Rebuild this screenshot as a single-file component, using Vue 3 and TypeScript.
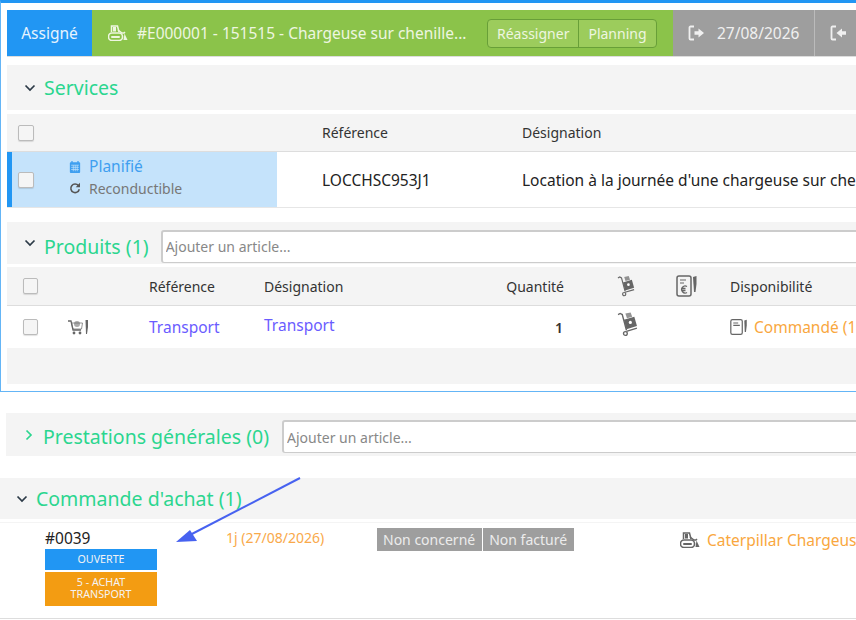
<script setup lang="ts">
interface Badge {
  label: string
  cls: string
}
const badges: Badge[] = [
  { label: 'OUVERTE', cls: 'blue' },
  { label: '5 - ACHAT TRANSPORT', cls: 'orange' }
]
const statuses = ['Non concerné', 'Non facturé']
</script>

<template>
  <div class="page">
    <svg class="defs" width="0" height="0">
      <symbol id="dozer" viewBox="0 0 20 16">
        <path d="M3.500 7V1h6l1.500 6" fill="none" stroke="currentColor" stroke-width="1.500" />
        <rect x="5" y="2" width="3" height="4.500" fill="currentColor" />
        <path d="M10 5l4 3h2l1-1" fill="none" stroke="currentColor" stroke-width="1.500" />
        <path d="M16.500 8.500l3 6.500h-4z" fill="currentColor" />
        <rect x=".5" y="8" width="14" height="7.500" rx="3.500" fill="none" stroke="currentColor" stroke-width="1.600" />
        <rect x="3" y="11" width="9" height="2" rx="1" fill="currentColor" />
      </symbol>
      <symbol id="cart" viewBox="0 0 22 16">
        <path d="M1 2h3l2 9h8" fill="none" stroke="currentColor" stroke-width="1.300" />
        <path d="M4.500 4h11l-1 6H6z" fill="none" stroke="currentColor" stroke-width="1" opacity=".7" />
        <circle cx="10" cy="5" r="3" fill="currentColor" opacity=".55" />
        <circle cx="7" cy="14" r="1.400" fill="currentColor" />
        <circle cx="13" cy="14" r="1.400" fill="currentColor" />
        <path d="M18.500 1h2.500v7l-1 7h-1z" fill="currentColor" />
      </symbol>
      <symbol id="truck" viewBox="0 0 20 24">
        <path d="M1 3l2-1 2 1 4 15" fill="none" stroke="currentColor" stroke-width="1.300" />
        <circle cx="8" cy="21" r="1.800" fill="none" stroke="currentColor" stroke-width="1.300" />
        <path d="M9 19l10-3" fill="none" stroke="currentColor" stroke-width="1.300" />
        <path d="M6.500 8l10-3 2.500 9-10 3z" fill="currentColor" />
        <path d="M8 2l5-1 1.500 4-5 1.500z" fill="currentColor" opacity=".7" />
        <circle cx="12.700" cy="10.500" r="1.500" fill="#fff" />
      </symbol>
      <symbol id="invoice" viewBox="0 0 22 22">
        <rect x="1" y="1" width="14" height="20" rx="2" fill="none" stroke="currentColor" stroke-width="1.500" />
        <path d="M4 5h6M4 8h4" stroke="currentColor" stroke-width="1.200" />
        <path d="M11 11.500a3.500 3.500 0 1 0 0 6M5.500 13.500h4M5.500 15.500h4" fill="none" stroke="currentColor" stroke-width="1.300" />
        <path d="M17 2l3.500-1v8l-1 8h-1.500z" fill="currentColor" />
      </symbol>
      <symbol id="order" viewBox="0 0 22 20">
        <rect x="1" y="1" width="14" height="18" rx="2" fill="none" stroke="currentColor" stroke-width="1.500" />
        <path d="M4 5h6M4 8h8" stroke="currentColor" stroke-width="1.300" />
        <path d="M17.500 2l3-1v7l-1 8h-1.500z" fill="currentColor" />
      </symbol>
      <symbol id="chev" viewBox="0 0 12 8">
        <path d="M1.500 1.500L6 6l4.500-4.500" fill="none" stroke="currentColor" stroke-width="1.700" />
      </symbol>
    </svg>

    <section class="panel">
      <header class="strip">
        <div class="state">Assigné</div>
        <div class="asset">
          <svg class="ico-dozer"><use href="#dozer" /></svg>
          <span class="asset-name">#E000001 - 151515 - Chargeuse sur chenille...</span>
          <div class="btn-group">
            <span>Réassigner</span>
            <span>Planning</span>
          </div>
        </div>
        <div class="date">
          <svg class="ico-door" viewBox="0 0 18 16">
            <path d="M6 1.500H2.500a1 1 0 0 0-1 1v11a1 1 0 0 0 1 1H6" fill="none" stroke="currentColor" stroke-width="1.800" />
            <path d="M6.500 6.300h4V3.500L16 8l-5.500 4.500V9.700h-4z" fill="currentColor" />
          </svg>
          <span>27/08/2026</span>
        </div>
        <div class="date">
          <svg class="ico-door" viewBox="0 0 18 16">
            <path d="M6 1.500H2.500a1 1 0 0 0-1 1v11a1 1 0 0 0 1 1H6" fill="none" stroke="currentColor" stroke-width="1.800" />
            <path d="M16 6.300h-4V3.500L6.500 8l5.500 4.500V9.700h4z" fill="currentColor" />
          </svg>
        </div>
      </header>

      <div class="sec-head services">
        <svg class="chev"><use href="#chev" /></svg>
        <h2>Services</h2>
      </div>

      <div class="svc-thead">
        <span class="check"></span>
        <span class="th">Référence</span>
        <span class="th">Désignation</span>
      </div>
      <div class="svc-row">
        <div class="svc-state">
          <span class="check"></span>
          <div class="svc-lines">
            <div class="planned">
              <svg class="ico-cal" viewBox="0 0 14 15">
                <path d="M1 3.500a1 1 0 0 1 1-1h10a1 1 0 0 1 1 1V14a1 1 0 0 1-1 1H2a1 1 0 0 1-1-1z" fill="currentColor" />
                <path d="M3.500 1v3M10.500 1v3" stroke="currentColor" stroke-width="1.500" />
                <path d="M2.500 6h9M2.500 8.500h9M2.500 11h9M5 6v7M7.300 6v7M9.600 6v7" stroke="#c5e3fb" stroke-width=".8" />
              </svg>
              <span>Planifié</span>
            </div>
            <div class="renew">
              <svg class="ico-redo" viewBox="0 0 14 14">
                <path d="M11 4.200A5 5 0 1 0 12 8.500" fill="none" stroke="currentColor" stroke-width="1.800" />
                <path d="M12.800 1v5h-5z" fill="currentColor" />
              </svg>
              <span>Reconductible</span>
            </div>
          </div>
        </div>
        <div class="svc-ref">LOCCHSC953J1</div>
        <div class="svc-label">Location à la journée d'une chargeuse sur chenilles</div>
      </div>

      <div class="sec-head products">
        <svg class="chev"><use href="#chev" /></svg>
        <h2>Produits (1)</h2>
        <input class="add" placeholder="Ajouter un article..." />
      </div>

      <div class="prod-grid prod-thead">
        <span class="check small"></span>
        <span class="th">Référence</span>
        <span class="th">Désignation</span>
        <span class="th qty">Quantité</span>
        <svg class="ico-truck head"><use href="#truck" /></svg>
        <svg class="ico-invoice"><use href="#invoice" /></svg>
        <span class="th">Disponibilité</span>
      </div>
      <div class="prod-grid prod-row">
        <div class="prod-first">
          <span class="check small"></span>
          <svg class="ico-cart"><use href="#cart" /></svg>
        </div>
        <span class="link">Transport</span>
        <span class="link up">Transport</span>
        <span class="qty strong">1</span>
        <svg class="ico-truck"><use href="#truck" /></svg>
        <span></span>
        <div class="avail">
          <svg class="ico-order"><use href="#order" /></svg>
          <span>Commandé (1)</span>
        </div>
      </div>
      <div class="prod-foot"></div>
    </section>

    <div class="sec-head general">
      <svg class="chev right"><use href="#chev" /></svg>
      <h2>Prestations générales (0)</h2>
      <input class="add" placeholder="Ajouter un article..." />
    </div>

    <div class="sec-head orders">
      <svg class="chev"><use href="#chev" /></svg>
      <h2>Commande d'achat (1)</h2>
    </div>

    <div class="order-row">
      <div class="order-id">
        <div class="order-num">#0039</div>
        <div v-for="b in badges" :key="b.label" class="badge" :class="b.cls">{{ b.label }}</div>
      </div>
      <div class="delay">1j (27/08/2026)</div>
      <div class="statuses">
        <span v-for="s in statuses" :key="s">{{ s }}</span>
      </div>
      <div class="order-asset">
        <svg class="ico-dozer dark"><use href="#dozer" /></svg>
        <span>Caterpillar Chargeuse sur chenilles</span>
      </div>
    </div>

    <svg class="arrow" width="856" height="620" viewBox="0 0 856 620">
      <path d="M300 478L188 536" stroke="#4762f0" stroke-width="2" fill="none" />
      <path d="M176 542L190 530L197 541z" fill="#4762f0" />
    </svg>
  </div>
</template>

<style>
html, body {
  margin: 0;
  background: #fff;
  overflow: hidden;
}
</style>

<style scoped>
.page {
  position: relative;
  width: 856px;
  height: 620px;
  overflow: hidden;
  font-family: "Noto Sans", sans-serif;
  font-size: 14px;
  color: #333;
  background: #fff;
  white-space: nowrap;
}
.defs {
  position: absolute;
}
.panel {
  height: 392px;
  width: 900px;
  box-sizing: border-box;
  border: 1px solid #64b5f6;
  border-top: 3px solid #2196f3;
  padding: 7px 0 0 6px;
  background: #fff;
}
.strip {
  display: flex;
  height: 47px;
  border-bottom: 1px solid #ddd;
  box-sizing: border-box;
}
.state {
  flex: none;
  width: 85px;
  background: #2196f3;
  color: #e6f3fe;
  font-size: 15.5px;
  display: flex;
  align-items: center;
  justify-content: center;
}
.asset {
  flex: none;
  width: 581px;
  background: #8bc34a;
  color: #eef6e0;
  font-size: 15.5px;
  display: flex;
  align-items: center;
  box-sizing: border-box;
  padding-left: 16px;
}
.ico-dozer {
  width: 20px;
  height: 16px;
  color: #eef6e0;
  flex: none;
}
.ico-dozer.dark {
  color: #666;
}
.asset-name {
  margin-left: 9px;
  width: 350px;
  flex: none;
}
.btn-group {
  display: flex;
  height: 29px;
  border: 1px solid #689f38;
  border-radius: 4px;
  box-sizing: border-box;
  background: #9ccc5c;
  font-size: 14px;
  overflow: hidden;
}
.btn-group span {
  display: flex;
  align-items: center;
  padding: 0 9px 0 9px;
}
.btn-group span + span {
  border-left: 1px solid #689f38;
}
.date {
  flex: none;
  background: #9e9e9e;
  color: #f0f0f0;
  font-size: 15.5px;
  display: flex;
  align-items: center;
  padding-left: 15px;
  width: 142px;
  box-sizing: border-box;
  gap: 11px;
  border-right: 1px solid #bbb;
}
.ico-door {
  width: 18px;
  height: 16px;
  flex: none;
}
.sec-head {
  display: flex;
  align-items: center;
  background: #f4f4f4;
  box-sizing: border-box;
}
.sec-head h2 {
  margin: 0;
  font-size: 19.5px;
  font-weight: 400;
  color: #2bd68f;
}
.chev {
  width: 12px;
  height: 8px;
  color: #2c3a47;
  flex: none;
}
.chev.right {
  transform: rotate(-90deg);
  color: #2bd68f;
  margin-bottom: 4px;
}
.services {
  margin-top: 8px;
  height: 45px;
  padding-left: 17px;
  gap: 8px;
}
.svc-thead {
  margin-top: 4px;
  height: 38px;
  background: #f4f4f4;
  border-bottom: 1px solid #ddd;
  display: grid;
  grid-template-columns: 315px 200px 1fr;
  align-items: center;
  box-sizing: border-box;
}
.check {
  display: block;
  width: 16px;
  height: 16px;
  box-sizing: border-box;
  border: 1px solid #bbb;
  border-radius: 2px;
  background: #f5f5f5;
  box-shadow: 0 1px 1px rgba(0, 0, 0, 0.12);
}
.svc-thead .check {
  margin-left: 11px;
}
.check.small {
  width: 15px;
  height: 16px;
  margin-left: 16px;
}
.th {
  font-size: 14px;
  color: #333;
}
.svc-row {
  height: 56px;
  display: grid;
  grid-template-columns: 270px 245px 1fr;
  align-items: center;
  border-bottom: 1px solid #e6e6e6;
  box-sizing: border-box;
}
.svc-state {
  height: 100%;
  background: #c5e3fb;
  border-left: 5px solid #2196f3;
  box-sizing: border-box;
  display: flex;
  align-items: center;
  padding-left: 6px;
}
.svc-lines {
  margin-left: 35px;
}
.planned {
  display: flex;
  align-items: center;
  gap: 8px;
  color: #3f9ff0;
  font-size: 15.5px;
  line-height: 21px;
  margin-top: -2px;
}
.ico-cal {
  width: 12px;
  height: 13px;
}
.renew {
  display: flex;
  align-items: center;
  gap: 8px;
  color: #777;
  font-size: 14px;
  line-height: 24px;
}
.ico-redo {
  width: 12px;
  height: 12px;
  color: #555;
  margin-top: -2px;
}
.svc-ref {
  padding-left: 45px;
  font-size: 15.5px;
  color: #222;
}
.svc-label {
  font-size: 15.5px;
  color: #222;
}
.products {
  margin-top: 14px;
  height: 42px;
  padding: 6px 0 0 17px;
  gap: 8px;
}
.products .chev {
  margin-bottom: 6px;
}
.add {
  flex: 1;
  height: 33px;
  box-sizing: border-box;
  border: 1px solid #ccc;
  border-top-width: 2px;
  border-left-width: 2px;
  border-radius: 3px;
  background: #fff;
  padding: 0 3px;
  font: 14px "Noto Sans", sans-serif;
  outline: none;
  min-width: 0;
}
.add::placeholder {
  color: #888;
  opacity: 1;
}
.products .add {
  margin-left: 4px;
}
.prod-grid {
  display: grid;
  grid-template-columns: 142px 115px 242px 58px 112px 54px 1fr;
  align-items: center;
  box-sizing: border-box;
}
.prod-thead {
  margin-top: 3px;
  height: 39px;
  background: #f4f4f4;
  border-bottom: 1px solid #ddd;
}
.prod-row {
  height: 42px;
}
.prod-first {
  display: flex;
  align-items: center;
}
.ico-cart {
  width: 22px;
  height: 16px;
  margin-left: 29px;
  color: #666;
}
.link {
  color: #6a5cff;
  font-size: 15.5px;
  margin-top: -1px;
}
.link.up {
  margin-top: -4px;
}
.qty {
  text-align: right;
}
.qty.strong {
  font-weight: 600;
  font-size: 14px;
  padding-right: 1px;
}
.ico-truck {
  width: 21px;
  height: 26px;
  color: #666;
  margin-left: 53px;
  margin-top: -6px;
}
.ico-truck.head {
  width: 18px;
  height: 22px;
  margin-top: 0;
}
.ico-invoice {
  width: 22px;
  height: 22px;
  color: #666;
}
.avail {
  display: flex;
  align-items: center;
  gap: 6px;
  color: #f9a73e;
  font-size: 15.5px;
  margin-top: -1px;
}
.ico-order {
  width: 18px;
  height: 18px;
  color: #666;
}
.prod-foot {
  height: 36px;
  background: #f4f4f4;
}
.general {
  margin: 21px 0 0 6px;
  height: 43px;
  padding: 4px 0 0 17px;
  gap: 8px;
  width: 900px;
}
.general .add {
  margin-left: 5px;
}
.orders {
  margin-top: 22px;
  height: 41px;
  padding-left: 16px;
  gap: 8px;
}
.order-row {
  margin-top: 3px;
  height: 97px;
  box-sizing: border-box;
  border-top: 1px solid #f4f4f4;
  border-bottom: 1px solid #ddd;
  display: grid;
  grid-template-columns: 226px 151px 303px 1fr;
  padding-top: 5px;
}
.order-id {
  padding-left: 45px;
}
.order-num {
  font-size: 15.5px;
  color: #222;
  line-height: 20px;
}
.badge {
  width: 112px;
  white-space: normal;
  text-align: center;
  color: #f3f3f3;
  font-size: 10.7px;
  line-height: 12px;
  box-sizing: border-box;
}
.badge.blue {
  background: #2196f3;
  height: 21px;
  line-height: 20px;
  margin-top: 1px;
  margin-bottom: 2px;
}
.badge.orange {
  background: #f39c12;
  height: 34px;
  padding: 4px 10px 0;
}
.delay {
  color: #f9a94a;
  font-size: 14px;
  line-height: 19px;
}
.statuses {
  display: flex;
  height: 23px;
  align-self: start;
  gap: 1px;
}
.statuses span {
  background: #9e9e9e;
  color: #ececec;
  font-size: 14px;
  display: flex;
  align-items: center;
  padding: 0 7px 0 6px;
}
.order-asset {
  display: flex;
  align-items: center;
  gap: 7px;
  color: #f9a73e;
  font-size: 15.5px;
  height: 24px;
  align-self: start;
}
.arrow {
  position: absolute;
  left: 0;
  top: 0;
  pointer-events: none;
}
</style>
